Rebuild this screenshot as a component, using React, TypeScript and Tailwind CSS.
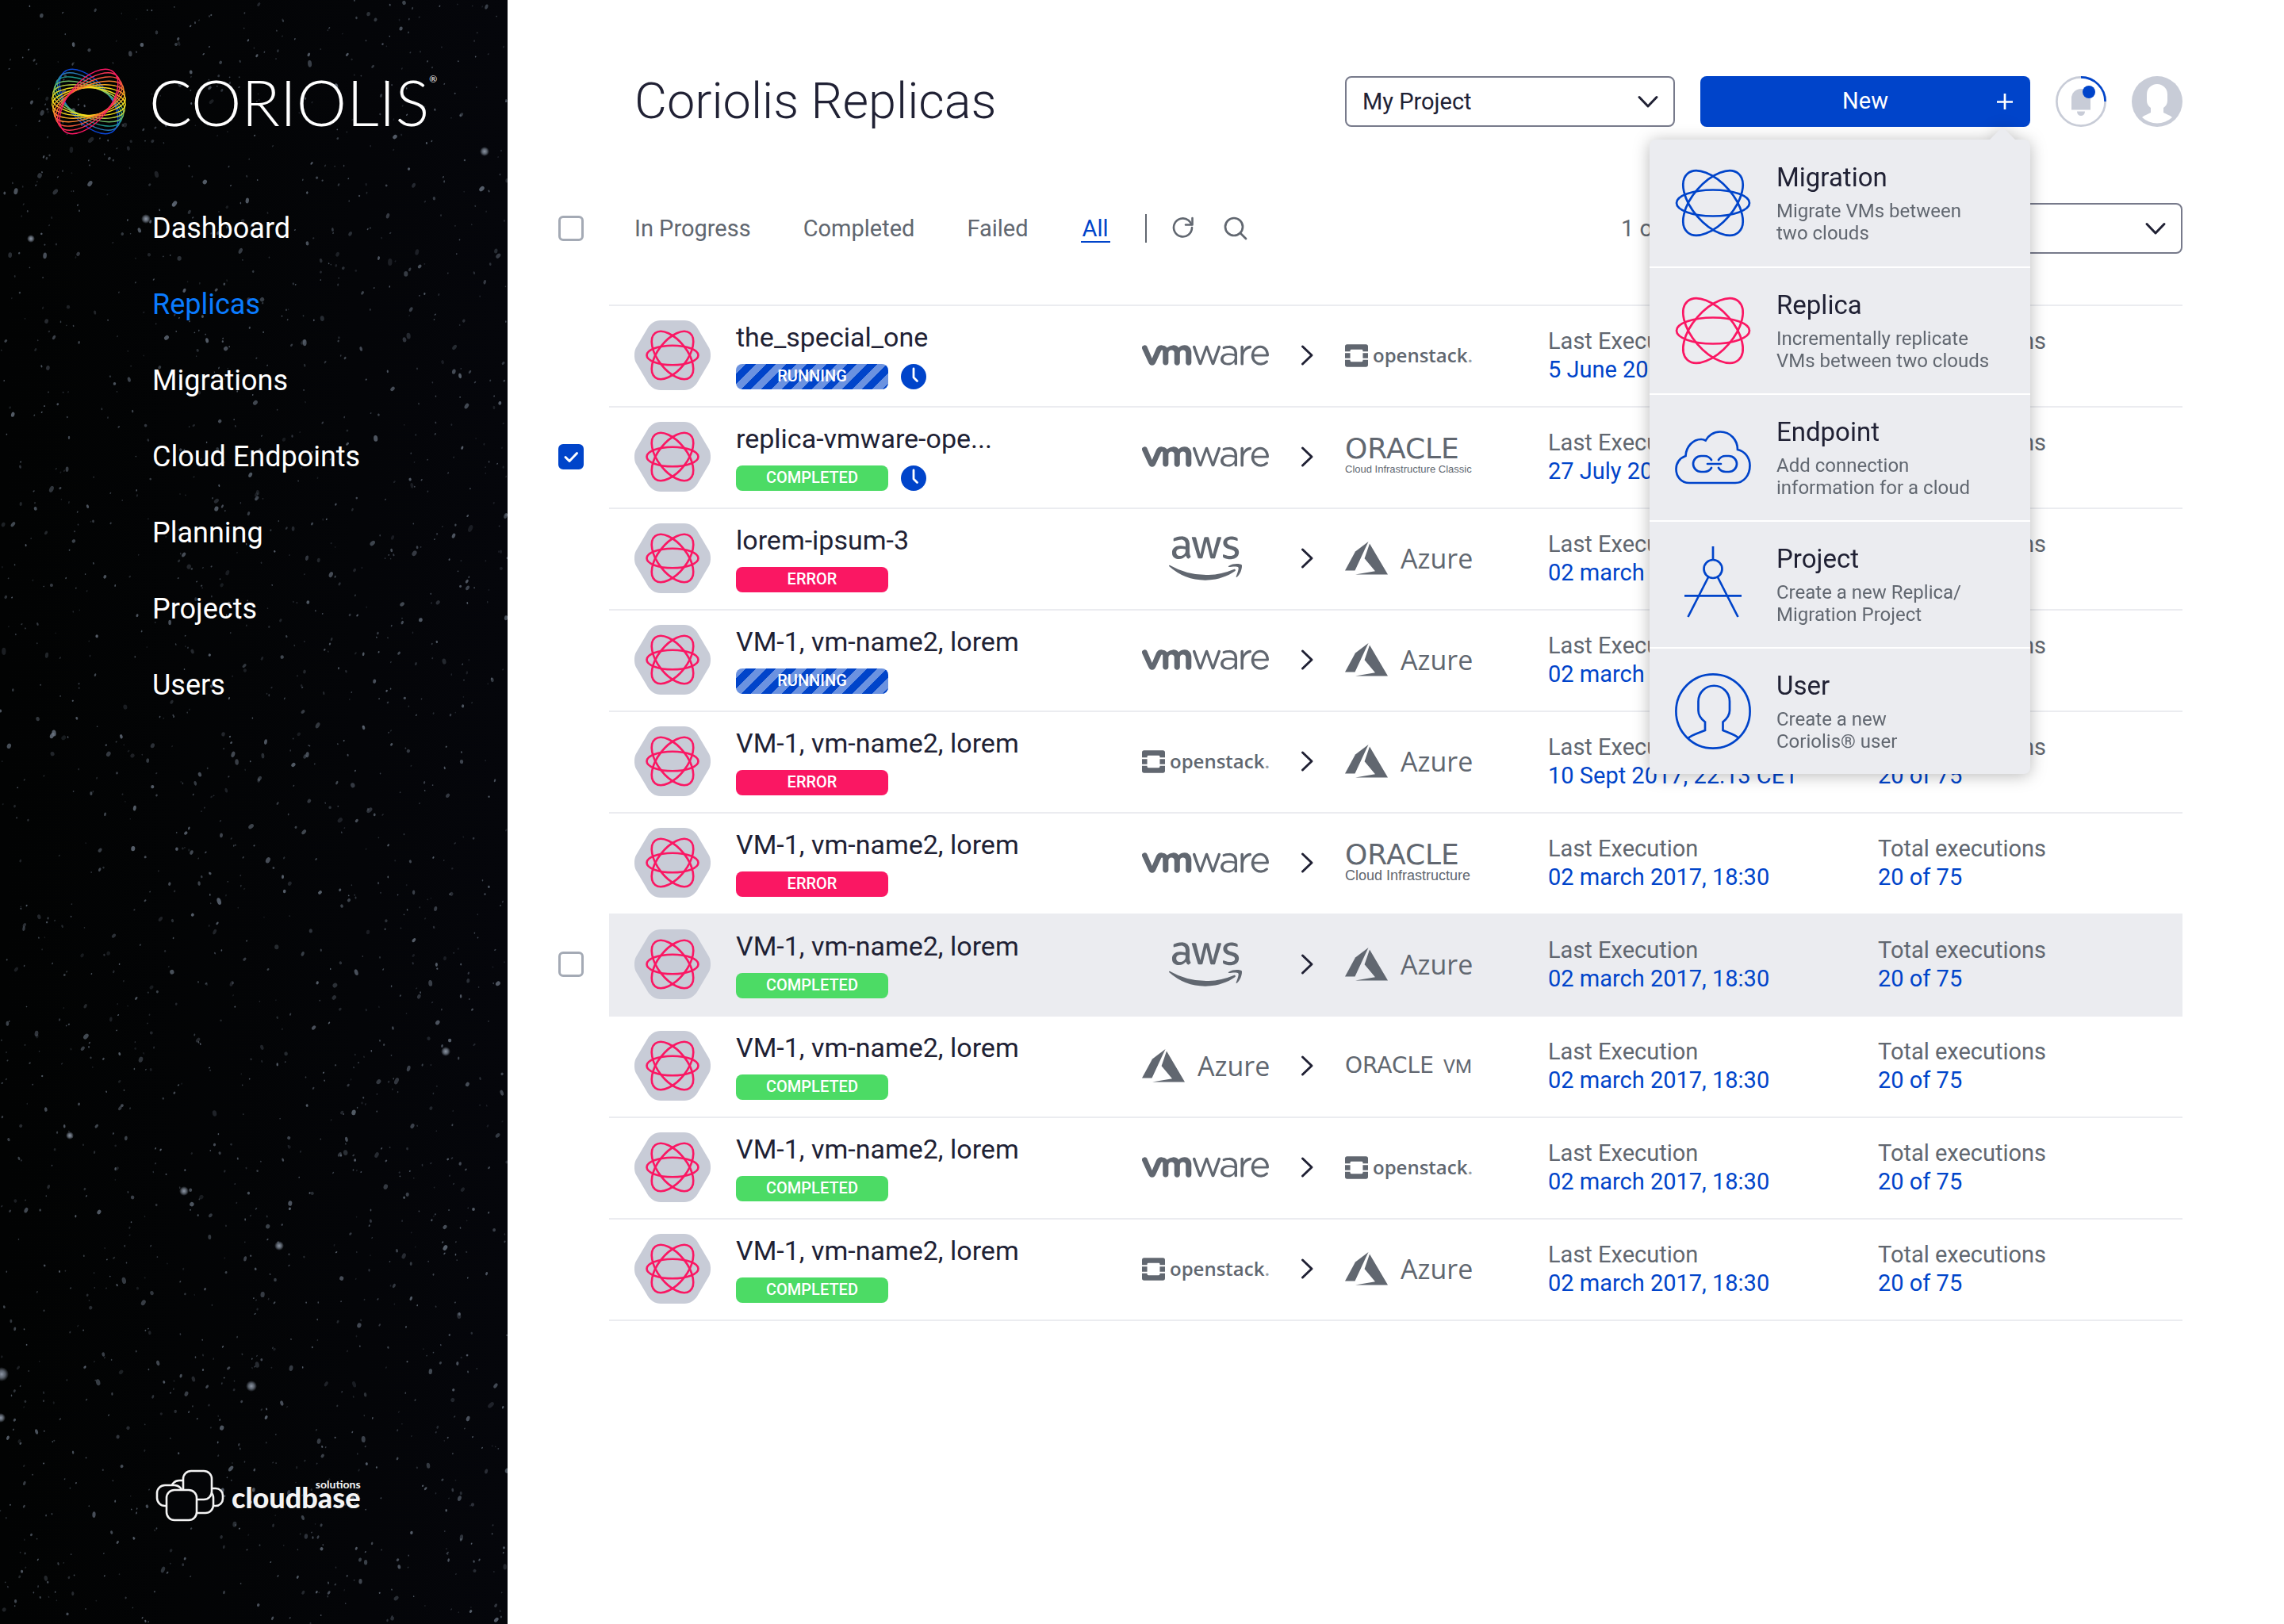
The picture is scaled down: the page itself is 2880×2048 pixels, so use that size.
import React from "react";
import { SiOpenstack, SiVmware } from "react-icons/si";
import { FaAws } from "react-icons/fa";

/* ---------- Sidebar ---------- */

function createRandom(seed: number) {
  let state = seed;
  return () => {
    state = (state * 1664525 + 1013904223) % 4294967296;
    return state / 4294967296;
  };
}

type Star = { x: number; y: number; rx: number; ry: number; turn: number; opacity: number };

function createStars(count: number): Star[] {
  const random = createRandom(42);
  return Array.from({ length: count }, () => {
    const size = 0.8 + Math.pow(random(), 4) * 1.9;
    return {
      x: Math.round(random() * 6400) / 10,
      y: Math.round(random() * 20480) / 10,
      rx: size,
      ry: size * (1 + random() * 0.8),
      turn: Math.round(random() * 70 - 20),
      opacity: 0.2 + random() * 0.6,
    };
  });
}

const STARS = createStars(2000);

const BRIGHT_STARS = [
  [184, 276, 4],
  [611, 191, 4],
  [352, 1571, 4],
  [232, 1502, 4],
  [317, 1748, 5],
  [2, 1733, 7],
  [88, 1432, 3],
  [562, 1326, 4],
  [1, 1788, 4],
  [39, 301, 3],
];

function Starfield() {
  return (
    <svg
      aria-hidden="true"
      className="absolute inset-0 h-full w-full"
      viewBox="0 0 640 2048"
      preserveAspectRatio="xMidYMid slice"
    >
      <defs>
        <radialGradient id="star-glow">
          <stop offset="0" stopColor="#8f98a6" />
          <stop offset="0.5" stopColor="#6f7885" stopOpacity="0.8" />
          <stop offset="1" stopColor="#6f7885" stopOpacity="0" />
        </radialGradient>
      </defs>
      {STARS.map((s, i) => (
        <ellipse
          key={i}
          cx={s.x}
          cy={s.y}
          rx={s.rx}
          ry={s.ry}
          fill="#6a7482"
          opacity={s.opacity}
          transform={`rotate(${s.turn} ${s.x} ${s.y})`}
        />
      ))}
      {BRIGHT_STARS.map(([x, y, r]) => (
        <circle key={`${x}-${y}`} cx={x} cy={y} r={r + 2} fill="url(#star-glow)" />
      ))}
    </svg>
  );
}

const RINGS = [
  { angle: 50, rx: 48.5, ry: 25.5, cool: "#0b46d6", warm: "#fa1763" },
  { angle: 41, rx: 48, ry: 23.5, cool: "#2a7ab8", warm: "#fb3556" },
  { angle: 32, rx: 47.5, ry: 21.5, cool: "#1f9e93", warm: "#fb5a3c" },
  { angle: 23, rx: 47, ry: 19.5, cool: "#6fbb66", warm: "#fb842e" },
  { angle: 14, rx: 46.5, ry: 18.5, cool: "#b9d042", warm: "#fcae24" },
  { angle: 5, rx: 46.5, ry: 17.5, cool: "#f3e11c", warm: "#fddc1c" },
];

function CoriolisRings() {
  return (
    <svg aria-hidden="true" className="size-24 shrink-0" viewBox="-48 -48 96 96" fill="none" strokeWidth="1.4">
      {RINGS.map((r) => (
        <ellipse key={r.cool} rx={r.rx} ry={r.ry} stroke={r.cool} transform={`rotate(${r.angle})`} />
      ))}
      {[...RINGS].reverse().map((r) => (
        <ellipse key={r.warm} rx={r.rx} ry={r.ry} stroke={r.warm} transform={`rotate(${-r.angle})`} />
      ))}
    </svg>
  );
}

function CloudbaseMark() {
  return (
    <svg
      aria-hidden="true"
      className="h-[68px] w-[88px]"
      viewBox="0 0 88 68"
      stroke="#f4f4f4"
      strokeWidth="2.6"
      fill="#040507"
    >
      <rect x="60" y="25" width="25" height="22" rx="9" />
      <rect x="20" y="15" width="32" height="30" rx="10" />
      <rect x="40" y="27" width="33" height="29" rx="10" />
      <rect x="2" y="21" width="32" height="26" rx="10" />
      <rect x="35" y="3" width="36" height="36" rx="10" />
      <rect x="14" y="27" width="38" height="38" rx="10" />
    </svg>
  );
}

const NAV = ["Dashboard", "Replicas", "Migrations", "Cloud Endpoints", "Planning", "Projects", "Users"];

function Sidebar() {
  return (
    <aside className="relative w-[640px] shrink-0 overflow-hidden bg-linear-to-r from-[#020303] to-[#05060b] text-white">
      <Starfield />
      <div className="relative flex h-full flex-col px-16 pt-20 pb-32">
        <a href="#home" className="flex h-24 items-center gap-7">
          <CoriolisRings />
          <span className="flex items-start font-['Lato'] text-[80px] leading-24 font-light">
            CORIOLIS
            <span className="text-[12px] leading-10 font-normal">®</span>
          </span>
        </a>
        <nav className="mt-16 pl-32">
          <ul>
            {NAV.map((item) => (
              <li key={item} className="flex h-24 items-center">
                <a
                  href={`#${item.toLowerCase().replace(" ", "-")}`}
                  aria-current={item === "Replicas" ? "page" : undefined}
                  className="text-4xl aria-[current=page]:text-[#0a7bff]"
                >
                  {item}
                </a>
              </li>
            ))}
          </ul>
        </nav>
        <a href="#cloudbase" className="mt-auto ml-[132px] flex items-end gap-2 self-start text-[#f4f4f4]">
          <CloudbaseMark />
          <span className="relative pb-3 font-['Lato'] text-4xl leading-10 font-black">
            cloudbase
            <span className="absolute right-0 bottom-10 text-[14px] leading-4 font-bold">solutions</span>
          </span>
        </a>
      </div>
    </aside>
  );
}

/* ---------- Icons ---------- */

function ChevronDown() {
  return (
    <svg
      aria-hidden="true"
      className="pointer-events-none absolute inset-y-0 right-[18px] my-auto size-8"
      viewBox="0 0 32 32"
      fill="none"
      stroke="#202134"
      strokeWidth="3"
      strokeLinecap="round"
      strokeLinejoin="round"
    >
      <path d="M5 10.500l11 11.500L27 10.500" />
    </svg>
  );
}

function ChevronRight() {
  return (
    <svg
      aria-label="to"
      className="size-8"
      viewBox="0 0 32 32"
      fill="none"
      stroke="#202134"
      strokeWidth="3"
      strokeLinecap="round"
      strokeLinejoin="round"
    >
      <path d="M10.500 5l11.500 11L10.500 27" />
    </svg>
  );
}

function AtomIcon() {
  return (
    <svg aria-hidden="true" className="size-24" viewBox="-48 -48 96 96" fill="none" stroke="currentColor" strokeWidth="2.700">
      <ellipse rx="46" ry="16.500" />
      <ellipse rx="49" ry="26" transform="rotate(49)" />
      <ellipse rx="49" ry="26" transform="rotate(-49)" />
    </svg>
  );
}

function CloudIcon() {
  return (
    <svg
      aria-hidden="true"
      className="size-24"
      viewBox="0 0 96 96"
      fill="none"
      stroke="currentColor"
      strokeWidth="2.700"
      strokeLinecap="round"
    >
      <path d="M18 80C8 80 1.500 72 1.500 62.500C1.500 55 6 48.500 13.500 46C14 34 23 25 33 25Q36 25 38.700 26.500C42 20 49 15.500 57 15.500C70 15.500 79 26 79 38C88 40 94.500 48 94.500 58C94.500 70 87 80 76 80Z" />
      <path d="M46 51Q43 46 37 46H33A10 10 0 0 0 33 66H37Q43 66 46 61" />
      <path d="M55 51Q58 46 64 46H68A10 10 0 0 1 68 66H64Q58 66 55 61" />
      <path d="M41 56H58" />
    </svg>
  );
}

function CompassIcon() {
  return (
    <svg aria-hidden="true" className="size-24" viewBox="0 0 96 96" fill="none" stroke="currentColor" strokeWidth="2.700">
      <circle cx="48" cy="28.500" r="11.500" />
      <path d="M48 0V17M12 62.300H84M42 39L16.500 89M54 39L79.500 89" />
    </svg>
  );
}

function UserIcon() {
  return (
    <svg aria-hidden="true" className="size-24" viewBox="0 0 96 96" fill="none" stroke="currentColor" strokeWidth="2.700">
      <circle cx="48" cy="48" r="46.600" />
      <path d="M16.500 82C22 77 31 75 38 72V61.500C32 57 29.500 52 29.500 47V35.500A19.700 19.700 0 0 1 69 35.500V47C69 52 66 57 60.500 61.500V72C67 75 76 77 80.500 82" />
    </svg>
  );
}

function ReplicaHexagon() {
  return (
    <svg aria-hidden="true" className="h-22 w-24" viewBox="0 0 96 88" fill="none">
      <path
        fill="#c8ccd7"
        d="M33 0H63C70 0 76 4 79.500 10L94 34.500C96.700 39 96.700 49 94 53.500L79.500 78C76 84 70 88 63 88H33C26 88 20 84 16.500 78L2 53.500C-.7 49-.7 39 2 34.500L16.500 10C20 4 26 0 33 0Z"
      />
      <g stroke="#fa1763" strokeWidth="2.600" transform="translate(48 44)">
        <ellipse rx="32.500" ry="12.300" />
        <ellipse rx="35.500" ry="18.400" transform="rotate(52)" />
        <ellipse rx="35.500" ry="18.400" transform="rotate(-52)" />
      </g>
    </svg>
  );
}

function ClockIcon() {
  return (
    <svg role="img" aria-label="Scheduled" className="size-8" viewBox="0 0 32 32" fill="none">
      <circle cx="16" cy="16" r="16" fill="#0044ca" />
      <path d="M16 6V17L20.500 21.500" stroke="#fff" strokeWidth="2.800" strokeLinecap="round" strokeLinejoin="round" />
    </svg>
  );
}

/* ---------- Provider logos ---------- */

function VmwareLogo() {
  return <SiVmware title="VMware" className="size-40" />;
}

function OpenstackLogo() {
  return (
    <span className="flex w-40 items-center gap-[6px]">
      <SiOpenstack aria-hidden="true" className="size-[29px] shrink-0" />
      <span className="font-['Open_Sans'] text-2xl leading-8 font-semibold">
        openstack<span className="text-[#9a9fa6]">.</span>
      </span>
    </span>
  );
}

function AwsLogo() {
  return <FaAws title="AWS" className="size-[92px]" />;
}

function AzureLogo() {
  return (
    <span className="flex w-40 items-center gap-4">
      <svg aria-hidden="true" className="h-[42px] w-[54px] shrink-0" viewBox="0 0 54 42" fill="currentColor">
        <path d="M29.500 0L13 12.500L0 36.500H12.500Z" />
        <path d="M31 2.500L54 41.500H13L38 37.300L24.600 21.300Z" />
      </svg>
      <span className="font-['Open_Sans'] text-[34px] leading-10">Azure</span>
    </span>
  );
}

function OracleLogo({ product }: { product: "classic" | "cloud" | "vm" }) {
  if (product === "vm") {
    return (
      <span className="flex w-40 items-baseline justify-between">
        <span className="font-['DejaVu_Sans'] text-[28px] leading-8">ORACLE</span>
        <span className="text-2xl leading-8">VM</span>
      </span>
    );
  }
  return (
    <span className="flex w-40 flex-col whitespace-nowrap">
      <span className="font-['DejaVu_Sans'] text-4xl leading-8">ORACLE</span>
      {product === "classic" ? (
        <span className="font-['Liberation_Sans'] text-[13px] leading-5">Cloud Infrastructure Classic</span>
      ) : (
        <span className="font-['Liberation_Sans'] text-[18px] leading-5">Cloud Infrastructure</span>
      )}
    </span>
  );
}

const LOGOS = {
  vmware: <VmwareLogo />,
  openstack: <OpenstackLogo />,
  aws: <AwsLogo />,
  azure: <AzureLogo />,
  oracleClassic: <OracleLogo product="classic" />,
  oracleCloud: <OracleLogo product="cloud" />,
  oracleVm: <OracleLogo product="vm" />,
};

/* ---------- Header ---------- */

const MENU = [
  { title: "Migration", lines: ["Migrate VMs between", "two clouds"], icon: <AtomIcon />, color: "text-[#0044ca]" },
  {
    title: "Replica",
    lines: ["Incrementally replicate", "VMs between two clouds"],
    icon: <AtomIcon />,
    color: "text-[#fa1763]",
  },
  { title: "Endpoint", lines: ["Add connection", "information for a cloud"], icon: <CloudIcon />, color: "text-[#0044ca]" },
  { title: "Project", lines: ["Create a new Replica/", "Migration Project"], icon: <CompassIcon />, color: "text-[#0044ca]" },
  { title: "User", lines: ["Create a new", "Coriolis® user"], icon: <UserIcon />, color: "text-[#0044ca]" },
];

function NewMenu() {
  return (
    <div className="absolute top-full right-0 z-10 mt-4 w-[480px] drop-shadow-[0_2px_10px_rgba(0,0,0,0.28)]">
      <svg aria-hidden="true" className="absolute right-[19px] bottom-full h-4 w-8" viewBox="0 0 32 16">
        <path d="M0 16L16 0L32 16Z" fill="#ebecf0" />
      </svg>
      <ul className="overflow-hidden rounded-lg bg-[#ebecf0]">
        {MENU.map((item) => (
          <li key={item.title} className="h-40 border-white not-first:border-t-2">
            <button type="button" className="flex h-full w-full items-center gap-8 px-8 text-left">
              <span className={item.color}>{item.icon}</span>
              <span className="flex flex-col gap-2">
                <span className="text-[33px] leading-10 text-[#202134]">{item.title}</span>
                <span className="text-2xl leading-7 text-[#616770]">
                  {item.lines[0]}
                  <br />
                  {item.lines[1]}
                </span>
              </span>
            </button>
          </li>
        ))}
      </ul>
    </div>
  );
}

function Select({ label, value }: { label: string; value: string }) {
  return (
    <div className="relative w-[416px]">
      <select
        aria-label={label}
        className="h-16 w-full appearance-none rounded-lg border-2 border-[#777a8b] bg-white pr-14 pl-5 text-[29px] leading-9 text-[#202134]"
      >
        <option>{value}</option>
      </select>
      <ChevronDown />
    </div>
  );
}

function Header() {
  return (
    <header className="flex h-16 items-center justify-between pl-24">
      <h1 className="text-[63px] leading-16 font-light whitespace-nowrap text-[#202134]">Coriolis Replicas</h1>
      <div className="flex gap-8">
        <Select label="Project" value="My Project" />
        <div className="relative w-[416px]">
          <button
            type="button"
            aria-expanded="true"
            className="grid h-16 w-full grid-cols-[32px_1fr_32px] items-center rounded-lg bg-[#0044ca] px-4 text-[29px] text-white"
          >
            <span className="col-start-2">New</span>
            <svg aria-hidden="true" className="size-8" viewBox="0 0 32 32" stroke="#fff" strokeWidth="2.700">
              <path d="M16 6V26M6 16.500H26" />
            </svg>
          </button>
          <NewMenu />
        </div>
        <button type="button" aria-label="Notifications">
          <svg aria-hidden="true" className="size-16" viewBox="0 0 64 64" fill="none" strokeWidth="2.700">
            <circle cx="32" cy="32" r="30.600" stroke="#c8ccd7" />
            <path d="M32 1.400A30.600 30.600 0 0 1 62.600 32" stroke="#0044ca" />
            <path d="M20 42.500V28A12 12 0 0 1 44 28V42.500Z" fill="#c8ccd7" />
            <path d="M27 44.500H37A5 5.500 0 0 1 27 44.500Z" fill="#c8ccd7" />
            <circle cx="42" cy="20" r="8" fill="#0044ca" />
          </svg>
        </button>
        <button type="button" aria-label="Account">
          <svg aria-hidden="true" className="size-16" viewBox="0 0 64 64">
            <circle cx="32" cy="32" r="32" fill="#c8ccd7" />
            <path
              d="M19 23A13 13 0 0 1 45 23V31C45 35 43 38 40 40V46C43 48 48 49 51 52A28 28 0 0 1 13 52C16 49 21 48 24 46V40C21 38 19 35 19 31Z"
              fill="#fff"
            />
          </svg>
        </button>
      </div>
    </header>
  );
}

/* ---------- Filter bar ---------- */

function Checkbox({ label, checked = false }: { label: string; checked?: boolean }) {
  return (
    <span className="relative flex size-8 shrink-0">
      <input
        type="checkbox"
        aria-label={label}
        defaultChecked={checked}
        className="peer size-8 appearance-none rounded-md border-[3px] border-[#a4aab5] bg-white checked:border-[#0044ca] checked:bg-[#0044ca]"
      />
      <svg
        aria-hidden="true"
        className="pointer-events-none absolute inset-0 hidden size-8 peer-checked:block"
        viewBox="0 0 32 32"
        fill="none"
        stroke="#fff"
        strokeWidth="3"
        strokeLinecap="round"
        strokeLinejoin="round"
      >
        <path d="M9 16.500L14 21.500L23.500 11.500" />
      </svg>
    </span>
  );
}

function FilterBar() {
  return (
    <div className="mt-24 flex h-16 items-center text-[29px] leading-8 whitespace-nowrap text-[#616770]">
      <Checkbox label="Select all replicas" />
      <div className="ml-16 flex items-center gap-[66px]">
        <button type="button">In Progress</button>
        <button type="button">Completed</button>
        <button type="button">Failed</button>
        <button type="button" className="relative px-[2px] text-[#0044ca]">
          All
          <span className="absolute inset-x-0 top-full h-[2px] bg-[#0044ca]" />
        </button>
      </div>
      <span className="ml-11 h-9 w-[2px] bg-[#616770]" />
      <button type="button" aria-label="Refresh" className="ml-[30px]">
        <svg
          aria-hidden="true"
          className="size-8"
          viewBox="0 0 32 32"
          fill="none"
          stroke="currentColor"
          strokeWidth="2.600"
          strokeLinecap="round"
          strokeLinejoin="round"
        >
          <path d="M27 15A11.500 11.500 0 1 1 22.500 5.800C24.500 7.300 25.500 9 26.500 11" />
          <path d="M27.500 3V11.500H19" />
        </svg>
      </button>
      <button type="button" aria-label="Search" className="ml-[34px]">
        <svg
          aria-hidden="true"
          className="size-8"
          viewBox="0 0 32 32"
          fill="none"
          stroke="currentColor"
          strokeWidth="2.700"
          strokeLinecap="round"
        >
          <circle cx="14" cy="14" r="11" />
          <path d="M22 22L29 29" />
        </svg>
      </button>
      <div className="ml-auto flex items-center gap-8">
        <p className="w-[260px]">1 of 10 selected</p>
        <Select label="Bulk action" value="Actions" />
      </div>
    </div>
  );
}

/* ---------- Replica list ---------- */

type Status = "RUNNING" | "COMPLETED" | "ERROR";
type Replica = {
  name: string;
  status: Status;
  from: keyof typeof LOGOS;
  to: keyof typeof LOGOS;
  last?: string;
  scheduled?: boolean;
  checkbox?: "on" | "off";
  hovered?: boolean;
};

const VM = "VM-1, vm-name2, lorem";

const REPLICAS: Replica[] = [
  { name: "the_special_one", status: "RUNNING", from: "vmware", to: "openstack", last: "5 June 2017, 18:30", scheduled: true },
  {
    name: "replica-vmware-ope...",
    status: "COMPLETED",
    from: "vmware",
    to: "oracleClassic",
    last: "27 July 2017, 18:30",
    scheduled: true,
    checkbox: "on",
  },
  { name: "lorem-ipsum-3", status: "ERROR", from: "aws", to: "azure" },
  { name: VM, status: "RUNNING", from: "vmware", to: "azure" },
  { name: VM, status: "ERROR", from: "openstack", to: "azure", last: "10 Sept 2017, 22:13 CET" },
  { name: VM, status: "ERROR", from: "vmware", to: "oracleCloud" },
  { name: VM, status: "COMPLETED", from: "aws", to: "azure", checkbox: "off", hovered: true },
  { name: VM, status: "COMPLETED", from: "azure", to: "oracleVm" },
  { name: VM, status: "COMPLETED", from: "vmware", to: "openstack" },
  { name: VM, status: "COMPLETED", from: "openstack", to: "azure" },
];

const STATUS_STYLE: Record<Status, string> = {
  RUNNING:
    "bg-[repeating-linear-gradient(135deg,#6b92e0_0px,#6b92e0_9px,#0044ca_9px,#0044ca_18px)]",
  COMPLETED: "bg-[#4cdb65]",
  ERROR: "bg-[#fa1763]",
};

function ReplicaRow({ replica }: { replica: Replica }) {
  return (
    <li className="flex h-32 items-center">
      <div className="w-16 shrink-0">
        {replica.checkbox && (
          <Checkbox label={`Select ${replica.name}`} checked={replica.checkbox === "on"} />
        )}
      </div>
      <div
        className={`grid h-full flex-1 grid-cols-[128px_512fr_512px_416fr_384fr] items-center border-t-2 border-[#ebecf0] pb-[2px] pl-8 whitespace-nowrap ${
          replica.hovered ? "bg-[#ebecf0]" : ""
        }`}
      >
        <ReplicaHexagon />
        <div>
          <h2 className="text-[34px] leading-10 text-[#202134]">{replica.name}</h2>
          <div className="mt-[14px] flex gap-4">
            <span
              className={`h-8 w-48 rounded-lg text-center text-xl leading-[30px] font-medium text-white ${STATUS_STYLE[replica.status]}`}
            >
              {replica.status}
            </span>
            {replica.scheduled && <ClockIcon />}
          </div>
        </div>
        <div className="grid w-[416px] grid-cols-[160px_96px_160px] items-center justify-items-center text-[#616770]">
          <span className="flex h-24 items-center">{LOGOS[replica.from]}</span>
          <ChevronRight />
          <span className="flex h-24 items-center">{LOGOS[replica.to]}</span>
        </div>
        <div className="text-[29px] leading-9">
          <p className="text-[#616770]">Last Execution</p>
          <p className="text-[#0044ca]">{replica.last ?? "02 march 2017, 18:30"}</p>
        </div>
        <div className="text-[29px] leading-9">
          <p className="text-[#616770]">Total executions</p>
          <p className="text-[#0044ca]">20 of 75</p>
        </div>
      </div>
    </li>
  );
}

export default function App() {
  return (
    <div className="flex min-h-screen bg-white font-['Roboto',sans-serif]">
      <Sidebar />
      <main className="min-w-0 flex-1 pt-24 pr-32 pl-16">
        <Header />
        <FilterBar />
        <ul className="mt-16">
          {REPLICAS.map((replica, i) => (
            <ReplicaRow key={i} replica={replica} />
          ))}
        </ul>
        <div className="ml-16 h-[2px] bg-[#ebecf0]" />
      </main>
    </div>
  );
}
